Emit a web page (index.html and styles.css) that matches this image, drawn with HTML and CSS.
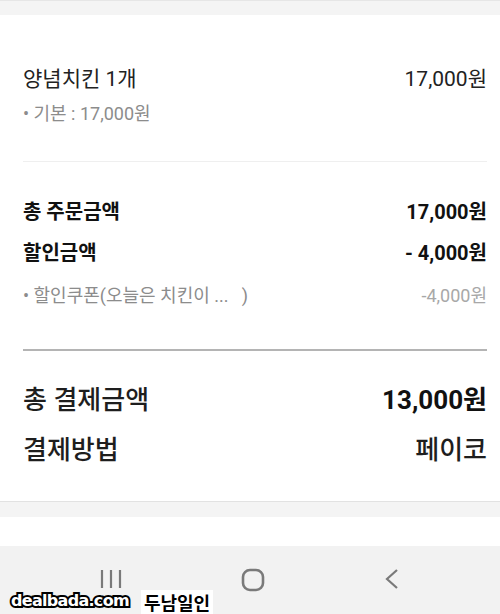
FILE: index.html
```html
<!DOCTYPE html>
<html lang="ko">
<head>
  <meta charset="UTF-8" />
  <meta name="viewport" content="width=device-width, initial-scale=1.0"/>
  <title>결제 정보</title>
  <link rel="stylesheet" href="styles.css">
</head>
<body>

  <div class="top-gap"></div>

  <!-- 주문 내역 -->
  <div class="card">
    <div class="row item">
      <span>양념치킨 1개</span>
      <span>17,000원</span>
    </div>
    <div class="row sub">
      <span>• 기본 : 17,000원</span>
    </div>

    <div class="divider"></div>

    <div class="row total">
      <span>총 주문금액</span>
      <span>17,000원</span>
    </div>
    <div class="row total discount">
      <span>할인금액</span>
      <span>- 4,000원</span>
    </div>
    <div class="row sub coupon">
      <span>• 할인쿠폰(오늘은 치킨이 ...&nbsp;&nbsp;&nbsp;)</span>
      <span class="light">-4,000원</span>
    </div>

    <div class="divider strong"></div>

    <div class="row pay">
      <span>총 결제금액</span>
      <span class="amount">13,000원</span>
    </div>
    <div class="row pay method">
      <span>결제방법</span>
      <span>페이코</span>
    </div>
  </div>

  <div class="gap"></div>
  <div class="blank"></div>

  <!-- 하단 내비게이션 -->
  <div class="navbar">
    <svg class="nav-icon" width="24" height="22" viewBox="0 0 24 22">
      <path d="M3 2v18M12 2v18M21 2v18" stroke="#7a7a7a" stroke-width="2.2" fill="none"/>
    </svg>
    <svg class="nav-icon" width="24" height="24" viewBox="0 0 24 24">
      <rect x="2" y="2" width="20" height="20" rx="7" stroke="#7a7a7a" stroke-width="2.6" fill="none"/>
    </svg>
    <svg class="nav-icon" width="18" height="22" viewBox="0 0 18 22">
      <path d="M14 2L4 11l10 9" stroke="#7a7a7a" stroke-width="2.2" fill="none"/>
    </svg>
  </div>

  <div class="watermark">
    <span class="site">dealbada.com</span>
    <span class="nick">두남일인</span>
  </div>

</body>
</html>
```

FILE: styles.css
```css
body {
  margin: 0;
  padding: 0;
  width: 500px;
  height: 614px;
  overflow: hidden;
  position: relative;
  background: #f3f3f3;
  font-family: Roboto, "Noto Sans CJK KR", sans-serif;
  color: #222;
}

.top-gap {
  height: 14px;
  border-top: 1px solid #e6e6e6;
  background: #f4f4f4;
}

.card {
  background: #fff;
  padding: 50px 13px 33px 23px;
  border-bottom: 1px solid #e2e2e2;
}

.row {
  display: flex;
  justify-content: space-between;
  align-items: center;
}

.item {
  font-size: 21px;
  line-height: 28px;
  color: #222;
}

.sub {
  margin-top: 9px;
  font-size: 18px;
  line-height: 24px;
  color: #8c8c8c;
}

.sub .light {
  color: #a8a8a8;
}

.divider {
  height: 1px;
  background: #efefef;
  margin-top: 35px;
}

.divider.strong {
  height: 2px;
  background: #b4b4b4;
  margin-top: 41px;
}

.total {
  margin-top: 35px;
  font-size: 20px;
  line-height: 30px;
  font-weight: bold;
  color: #111;
}

.total.discount {
  margin-top: 11px;
}

.coupon {
  margin-top: 16px;
}

.pay {
  margin-top: 31px;
  font-size: 26px;
  line-height: 36px;
  font-weight: 500;
  color: #1e1e1e;
}

.pay .amount {
  font-size: 26px;
  font-weight: bold;
  color: #111;
}

.pay.method {
  margin-top: 14px;
}

.gap {
  height: 15px;
  background: #f4f4f4;
}

.blank {
  height: 29px;
  background: #fff;
}

.navbar {
  height: 69px;
  background: #f2f2f2;
  display: flex;
  justify-content: center;
  align-items: flex-start;
  gap: 118px;
  padding-top: 22px;
  box-sizing: border-box;
}

.nav-icon {
  display: block;
}

/* 워터마크 */
.watermark {
  position: absolute;
  left: 11px;
  bottom: 0;
  display: flex;
  align-items: flex-end;
  gap: 12px;
}

.site {
  font-family: "DejaVu Sans", sans-serif;
  font-weight: bold;
  font-size: 16px;
  line-height: 22px;
  color: #fff;
  -webkit-text-stroke: 4px #000;
  paint-order: stroke fill;
  letter-spacing: -0.7px;
  margin-bottom: 2px;
}

.nick {
  background: #fff;
  padding: 0 3px;
  font-family: "Noto Sans CJK KR", sans-serif;
  font-weight: bold;
  font-size: 18px;
  line-height: 24px;
  color: #000;
}
```
